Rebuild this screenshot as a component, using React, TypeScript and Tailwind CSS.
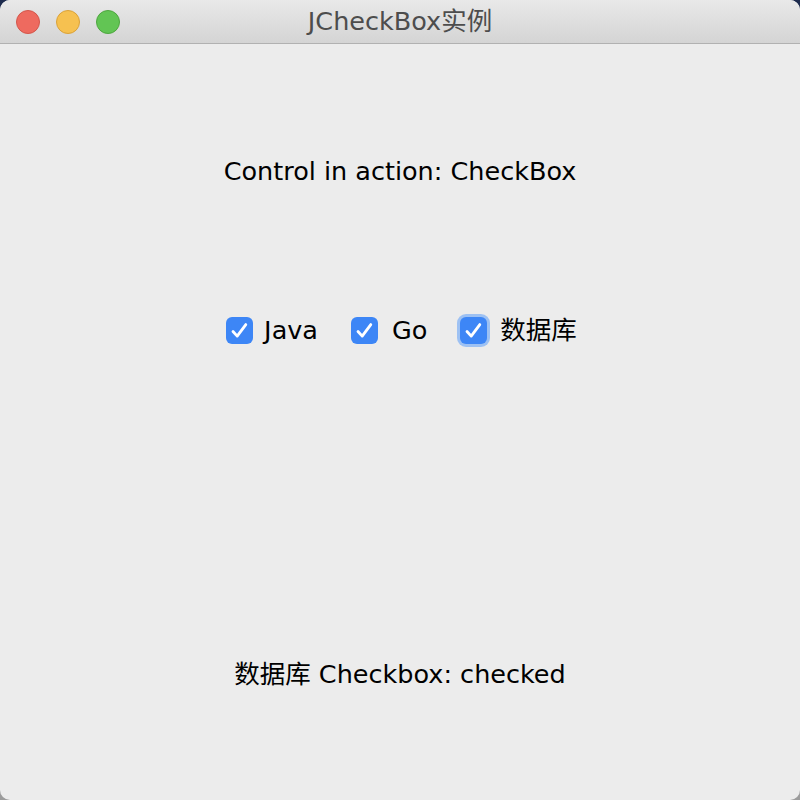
import React from 'react';

const FONT = { fontFamily: '"DejaVu Sans", "Noto Sans CJK SC", sans-serif' };

function Check({ focused }: { focused?: boolean }) {
  return (
    <span className={`relative flex items-center justify-center w-[27px] h-[27px] rounded-[6px] bg-[#3d86f6]
      ${focused ? 'ring-[3px] ring-[#8ab6f5]/80' : ''}`}>
      <svg width="27" height="27" viewBox="0 0 27 27" fill="none">
        <path d="M7 14.5l4.2 4.6L19.8 7.6" stroke="white" strokeWidth="2.8" strokeLinecap="round" strokeLinejoin="round" />
      </svg>
    </span>
  );
}

function Box({ label, focused, gap }: { label: string; focused?: boolean; gap: string }) {
  return (
    <label className={`flex items-center ${gap}`}>
      <Check focused={focused} />
      <span className="text-[25.5px] text-black leading-none">{label}</span>
    </label>
  );
}

export default function App() {
  return (
    <div className="w-[800px] h-[800px] bg-gradient-to-b from-[#1d2b4d] to-[#9c9c9c]" style={FONT}>
      <div className="w-full h-full rounded-[10px] overflow-hidden bg-[#ececec] flex flex-col">
        <div className="relative h-[44px] flex-shrink-0 bg-gradient-to-b from-[#e9e9e9] to-[#d4d4d4] border-b border-[#b1b1b1] flex items-center justify-center">
          <div className="absolute left-[16px] top-[10px] flex gap-[16px]">
            <span className="w-[24px] h-[24px] rounded-full bg-[#ee6a5f] border border-[#d3564b]" />
            <span className="w-[24px] h-[24px] rounded-full bg-[#f6c150] border border-[#daa239]" />
            <span className="w-[24px] h-[24px] rounded-full bg-[#62c554] border border-[#4ea63f]" />
          </div>
          <span className="text-[25.5px] text-[#4d4d4d] leading-none">JCheckBox实例</span>
        </div>

        <div className="flex-1 flex flex-col items-center text-black">
          <p className="mt-[111px] text-[25.5px] leading-[32px]">Control in action: CheckBox</p>
          <div className="mt-[130px] pl-[3px] flex items-center gap-[33px]">
            <Box label="Java" gap="gap-[11px]" />
            <Box label="Go" gap="gap-[14px]" />
            <Box label="数据库" focused gap="gap-[13px]" />
          </div>
          <p className="mt-[314px] text-[25.5px] leading-[32px]">数据库 Checkbox: checked</p>
        </div>
      </div>
    </div>
  );
}
